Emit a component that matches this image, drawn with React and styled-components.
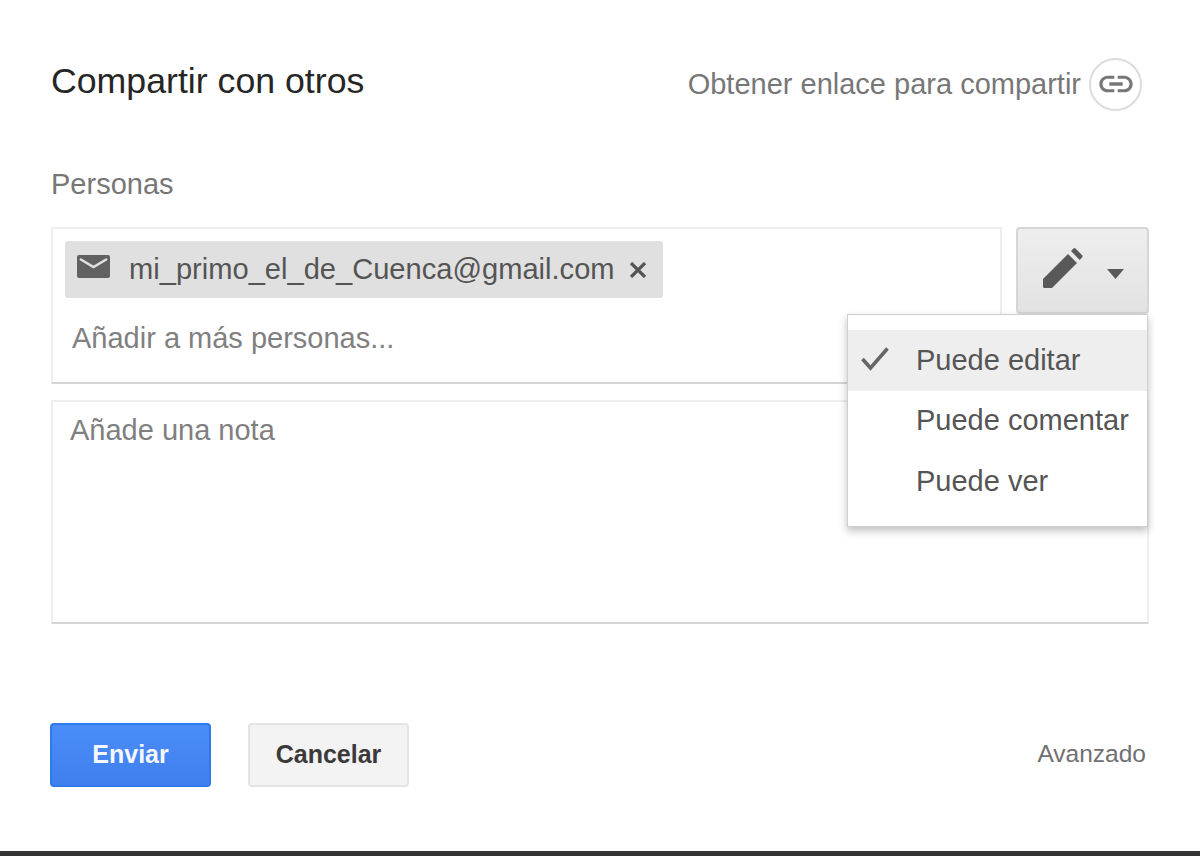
import React from 'react'
import styled, { createGlobalStyle } from 'styled-components'

const Global = createGlobalStyle`
  html, body { margin: 0; padding: 0; background: #fff; }
  body { font-family: "Liberation Sans", Arial, sans-serif; }
`

const Page = styled.div`
  height: 856px;
  display: flex;
  flex-direction: column;
  overflow: hidden;
`
const Dialog = styled.div`
  flex: 1;
  padding: 58px 51px 0 51px;
  display: flex;
  flex-direction: column;
`
const Header = styled.div`
  display: flex;
  justify-content: space-between;
  align-items: center;
  height: 52px;
`
const Title = styled.h2`
  margin: 0 0 6px;
  font-size: 35.7px;
  font-weight: 400;
  color: #262626;
`
const ShareLink = styled.div`
  display: flex;
  align-items: center;
  gap: 8px;
  margin-right: 7px;
  font-size: 29px;
  color: #777;
`
const LinkCircle = styled.span`
  width: 53px;
  height: 53px;
  box-sizing: border-box;
  border: 2px solid #dcdcdc;
  border-radius: 50%;
  display: flex;
  align-items: center;
  justify-content: center;
`
const Label = styled.div`
  margin-top: 58px;
  height: 32px;
  line-height: 32px;
  font-size: 29px;
  color: #777;
`
const Row = styled.div`
  position: relative;
  margin-top: 27px;
  display: flex;
  gap: 14px;
  align-items: flex-start;
`
const Recipients = styled.div`
  width: 951px;
  height: 157px;
  box-sizing: border-box;
  border: 2px solid #eeeeee;
  border-bottom-color: #d4d4d4;
  padding: 12px 12px;
`
const Chip = styled.div`
  width: 598px;
  height: 57px;
  box-sizing: border-box;
  background: #e0e0e0;
  border-radius: 3px;
  padding: 0 16px 0 12px;
  display: flex;
  align-items: center;
  font-size: 29.1px;
  color: #555;
  white-space: nowrap;
`
const MailIcon = styled.svg`
  margin-bottom: 7px;
`
const ChipText = styled.span`
  margin-left: 19px;
  flex: 1;
`
const Placeholder = styled.div`
  font-size: 29px;
  color: #808080;
  line-height: 32px;
`
const AddMore = styled(Placeholder)`
  margin-top: 24px;
  padding-left: 7px;
`
const PermButton = styled.button`
  width: 133px;
  height: 87px;
  box-sizing: border-box;
  padding: 0 0 0 2px;
  border: 2px solid #d6d6d6;
  border-radius: 4px;
  background: linear-gradient(#eeeeee, #e2e2e2);
  display: flex;
  align-items: center;
  justify-content: center;
  gap: 24px;
`
const Pencil = styled.svg`
  margin-bottom: 6px;
`
const Caret = styled.svg`
  margin-top: 6px;
`
const Menu = styled.div`
  position: absolute;
  left: 796px;
  top: 87px;
  width: 301px;
  height: 213px;
  box-sizing: border-box;
  padding: 15px 0;
  background: #fff;
  border: 1px solid #cfcfcf;
  box-shadow: 0 4px 8px rgba(0, 0, 0, 0.25);
  z-index: 2;
`
const MenuItem = styled.div`
  position: relative;
  height: 60.5px;
  display: flex;
  align-items: center;
  padding-left: 68px;
  font-size: 29px;
  color: #555;
  white-space: nowrap;
  background: ${p => (p.$active ? '#eeeeee' : 'transparent')};
`
const Check = styled.svg`
  position: absolute;
  left: 13px;
  top: 17px;
`
const Note = styled.div`
  margin-top: 16px;
  width: 1098px;
  height: 224px;
  box-sizing: border-box;
  border: 2px solid #eeeeee;
  border-bottom-color: #d4d4d4;
  padding: 12px 17px;
`
const Footer = styled.div`
  margin-top: 99px;
  display: flex;
  align-items: center;
`
const Btn = styled.button`
  width: 161px;
  height: 64px;
  box-sizing: border-box;
  padding: 0 0 2px;
  margin-left: ${p => (p.$primary ? '-1px' : '37px')};
  border-radius: 4px;
  border: 2px solid ${p => (p.$primary ? '#3079ed' : '#e4e4e4')};
  background: ${p => (p.$primary ? 'linear-gradient(#4b8df8, #3f7fee)' : '#f3f3f3')};
  color: ${p => (p.$primary ? '#f4f8ff' : '#3a3a3a')};
  font-family: inherit;
  font-size: 25px;
  font-weight: 700;
`
const Advanced = styled.div`
  margin-left: auto;
  margin-right: 3px;
  margin-bottom: 2px;
  font-size: 24.5px;
  color: #707070;
`
const BottomBar = styled.div`
  height: 5px;
  background: #343434;
`

export default function App() {
  return (
    <Page>
      <Global />
      <Dialog>
        <Header>
          <Title>Compartir con otros</Title>
          <ShareLink>
            Obtener enlace para compartir
            <LinkCircle>
              <svg width="40" height="40" viewBox="0 0 24 24" fill="#777">
                <path d="M3.9 12c0-1.71 1.39-3.1 3.1-3.1h4V7H7c-2.76 0-5 2.24-5 5s2.24 5 5 5h4v-1.9H7c-1.71 0-3.1-1.39-3.1-3.1zM8 13h8v-2H8v2zm9-6h-4v1.9h4c1.71 0 3.1 1.39 3.1 3.1s-1.39 3.1-3.1 3.1h-4V17h4c2.76 0 5-2.24 5-5s-2.24-5-5-5z" />
              </svg>
            </LinkCircle>
          </ShareLink>
        </Header>
        <Label>Personas</Label>
        <Row>
          <Recipients>
            <Chip>
              <MailIcon width="33" height="23" viewBox="0 0 33 23">
                <rect width="33" height="23" rx="2" fill="#616161" />
                <path d="M3 4l13.5 8L30 4" fill="none" stroke="#e0e0e0" strokeWidth="2.6" />
              </MailIcon>
              <ChipText>mi_primo_el_de_Cuenca@gmail.com</ChipText>
              <svg width="18" height="16" viewBox="0 0 18 16" stroke="#555" strokeWidth="3.2">
                <path d="M2 1l14 14M16 1L2 15" />
              </svg>
            </Chip>
            <AddMore>Añadir a más personas...</AddMore>
          </Recipients>
          <PermButton>
            <Pencil width="40" height="40" viewBox="0 0 40 40" fill="#595959">
              <path d="M0 31L25 6l9 9L9 40H1.500Q0 40 0 38.500Z" />
              <path d="M28 3l2.500-2.500q1-.8 2 0l6.700 6.700q.8 1 0 2L36.700 12Z" />
            </Pencil>
            <Caret width="17" height="10" viewBox="0 0 17 10" fill="#595959">
              <path d="M0 0h17L8.500 10z" />
            </Caret>
          </PermButton>
          <Menu>
            <MenuItem $active>
              <Check width="28" height="24" viewBox="0 0 28 24" fill="none" stroke="#666" strokeWidth="3.6">
                <path d="M1.500 12l8 9L26.500 1.500" />
              </Check>
              Puede editar
            </MenuItem>
            <MenuItem>Puede comentar</MenuItem>
            <MenuItem>Puede ver</MenuItem>
          </Menu>
        </Row>
        <Note>
          <Placeholder>Añade una nota</Placeholder>
        </Note>
        <Footer>
          <Btn $primary>Enviar</Btn>
          <Btn>Cancelar</Btn>
          <Advanced>Avanzado</Advanced>
        </Footer>
      </Dialog>
      <BottomBar />
    </Page>
  )
}
